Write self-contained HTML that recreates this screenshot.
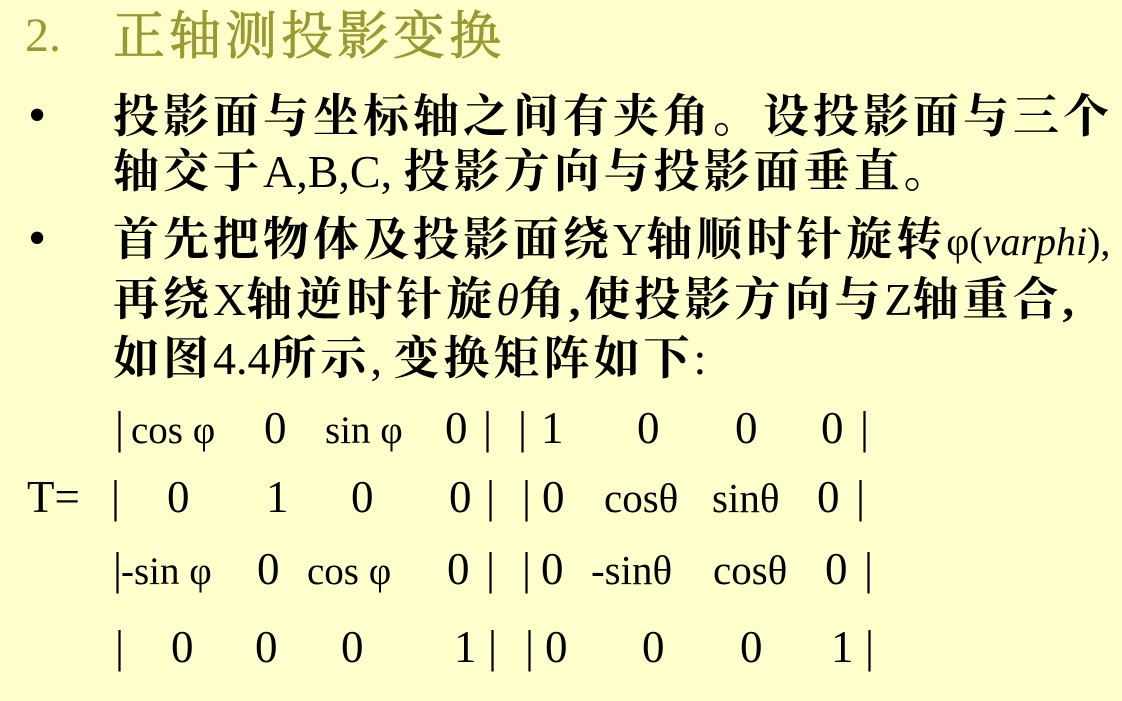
<!DOCTYPE html>
<html><head><meta charset="utf-8"><style>
html,body{margin:0;padding:0}
body{width:1122px;height:701px;background:#FFFFCC;position:relative;overflow:hidden;font-family:"Liberation Serif","Noto Serif CJK SC",serif;color:#000}
.a{position:absolute;white-space:nowrap;line-height:1}
.t{font-size:46px;font-weight:bold;letter-spacing:4px;font-family:"Liberation Serif","Noto Serif CJK SC",serif}
.n{font-weight:normal}
.m{font-size:45px}
.s{font-size:39px}
.s2{font-size:41px}
</style></head><body>
<div class="a" style="left:25px;top:12px;font-size:48px;color:#999933">2.</div>
<div class="a" style="left:113px;top:6px;font-size:52px;letter-spacing:4px;color:#999933;font-family:'Noto Serif CJK SC',serif;-webkit-text-stroke:0.8px #999933">正轴测投影变换</div>

<div class="a" style="left:28px;top:90px;font-size:52px">•</div>
<div class="a t" style="left:113px;top:94px">投影面与坐标轴之间有夹角。设投影面与三个</div>
<div class="a t" style="left:113px;top:149px">轴交于<span class="n" style="letter-spacing:0">A,B,C, </span>投影方向与投影面垂直。</div>

<div class="a" style="left:28px;top:213px;font-size:52px">•</div>
<div class="a t" style="left:113px;top:217px">首先把物体及投影面绕<span class="n" style="letter-spacing:0">Y</span>轴顺时针旋转<span class="n" style="font-size:40px;letter-spacing:0">φ(<i>varphi</i>),</span></div>
<div class="a t" style="left:113px;top:277px">再绕<span class="n" style="letter-spacing:0">X</span>轴逆时针旋<i class="n" style="letter-spacing:0">θ</i>角,使投影方向与<span class="n" style="letter-spacing:0">Z</span>轴重合,</div>
<div class="a t" style="left:113px;top:336px">如图<span class="n" style="letter-spacing:0">4.4</span>所示<span class="n" style="letter-spacing:0">, </span>变换矩阵如下<span class="n">:</span></div>

<!-- row1 -->
<div class="a m" style="left:115px;top:406px">|</div>
<div class="a s" style="left:131px;top:411px">cos φ</div>
<div class="a m" style="left:264px;top:406px">0</div>
<div class="a s" style="left:325px;top:411px">sin φ</div>
<div class="a m" style="left:445px;top:406px">0</div>
<div class="a m" style="left:483px;top:406px">|</div>
<div class="a m" style="left:518px;top:406px">|</div>
<div class="a m" style="left:541px;top:406px">1</div>
<div class="a m" style="left:637px;top:406px">0</div>
<div class="a m" style="left:735px;top:406px">0</div>
<div class="a m" style="left:821px;top:406px">0</div>
<div class="a m" style="left:860px;top:406px">|</div>

<!-- row2 -->
<div class="a m" style="left:27px;top:475px">T=</div>
<div class="a m" style="left:111px;top:475px">|</div>
<div class="a m" style="left:167px;top:475px">0</div>
<div class="a m" style="left:266px;top:475px">1</div>
<div class="a m" style="left:351px;top:475px">0</div>
<div class="a m" style="left:449px;top:475px">0</div>
<div class="a m" style="left:486px;top:475px">|</div>
<div class="a m" style="left:522px;top:475px">|</div>
<div class="a m" style="left:542px;top:475px">0</div>
<div class="a s2" style="left:604px;top:478px">cosθ</div>
<div class="a s2" style="left:712px;top:478px">sinθ</div>
<div class="a m" style="left:817px;top:475px">0</div>
<div class="a m" style="left:856px;top:475px">|</div>

<!-- row3 -->
<div class="a m" style="left:113px;top:547px">|</div>
<div class="a s" style="left:121px;top:552px">-sin φ</div>
<div class="a m" style="left:257px;top:547px">0</div>
<div class="a s" style="left:307px;top:552px">cos φ</div>
<div class="a m" style="left:447px;top:547px">0</div>
<div class="a m" style="left:486px;top:547px">|</div>
<div class="a m" style="left:522px;top:547px">|</div>
<div class="a m" style="left:541px;top:547px">0</div>
<div class="a s2" style="left:591px;top:550px">-sinθ</div>
<div class="a s2" style="left:713px;top:550px">cosθ</div>
<div class="a m" style="left:825px;top:547px">0</div>
<div class="a m" style="left:864px;top:547px">|</div>

<!-- row4 -->
<div class="a m" style="left:115px;top:625px">|</div>
<div class="a m" style="left:171px;top:625px">0</div>
<div class="a m" style="left:255px;top:625px">0</div>
<div class="a m" style="left:341px;top:625px">0</div>
<div class="a m" style="left:454px;top:625px">1</div>
<div class="a m" style="left:488px;top:625px">|</div>
<div class="a m" style="left:525px;top:625px">|</div>
<div class="a m" style="left:545px;top:625px">0</div>
<div class="a m" style="left:642px;top:625px">0</div>
<div class="a m" style="left:740px;top:625px">0</div>
<div class="a m" style="left:831px;top:625px">1</div>
<div class="a m" style="left:865px;top:625px">|</div>
</body></html>
